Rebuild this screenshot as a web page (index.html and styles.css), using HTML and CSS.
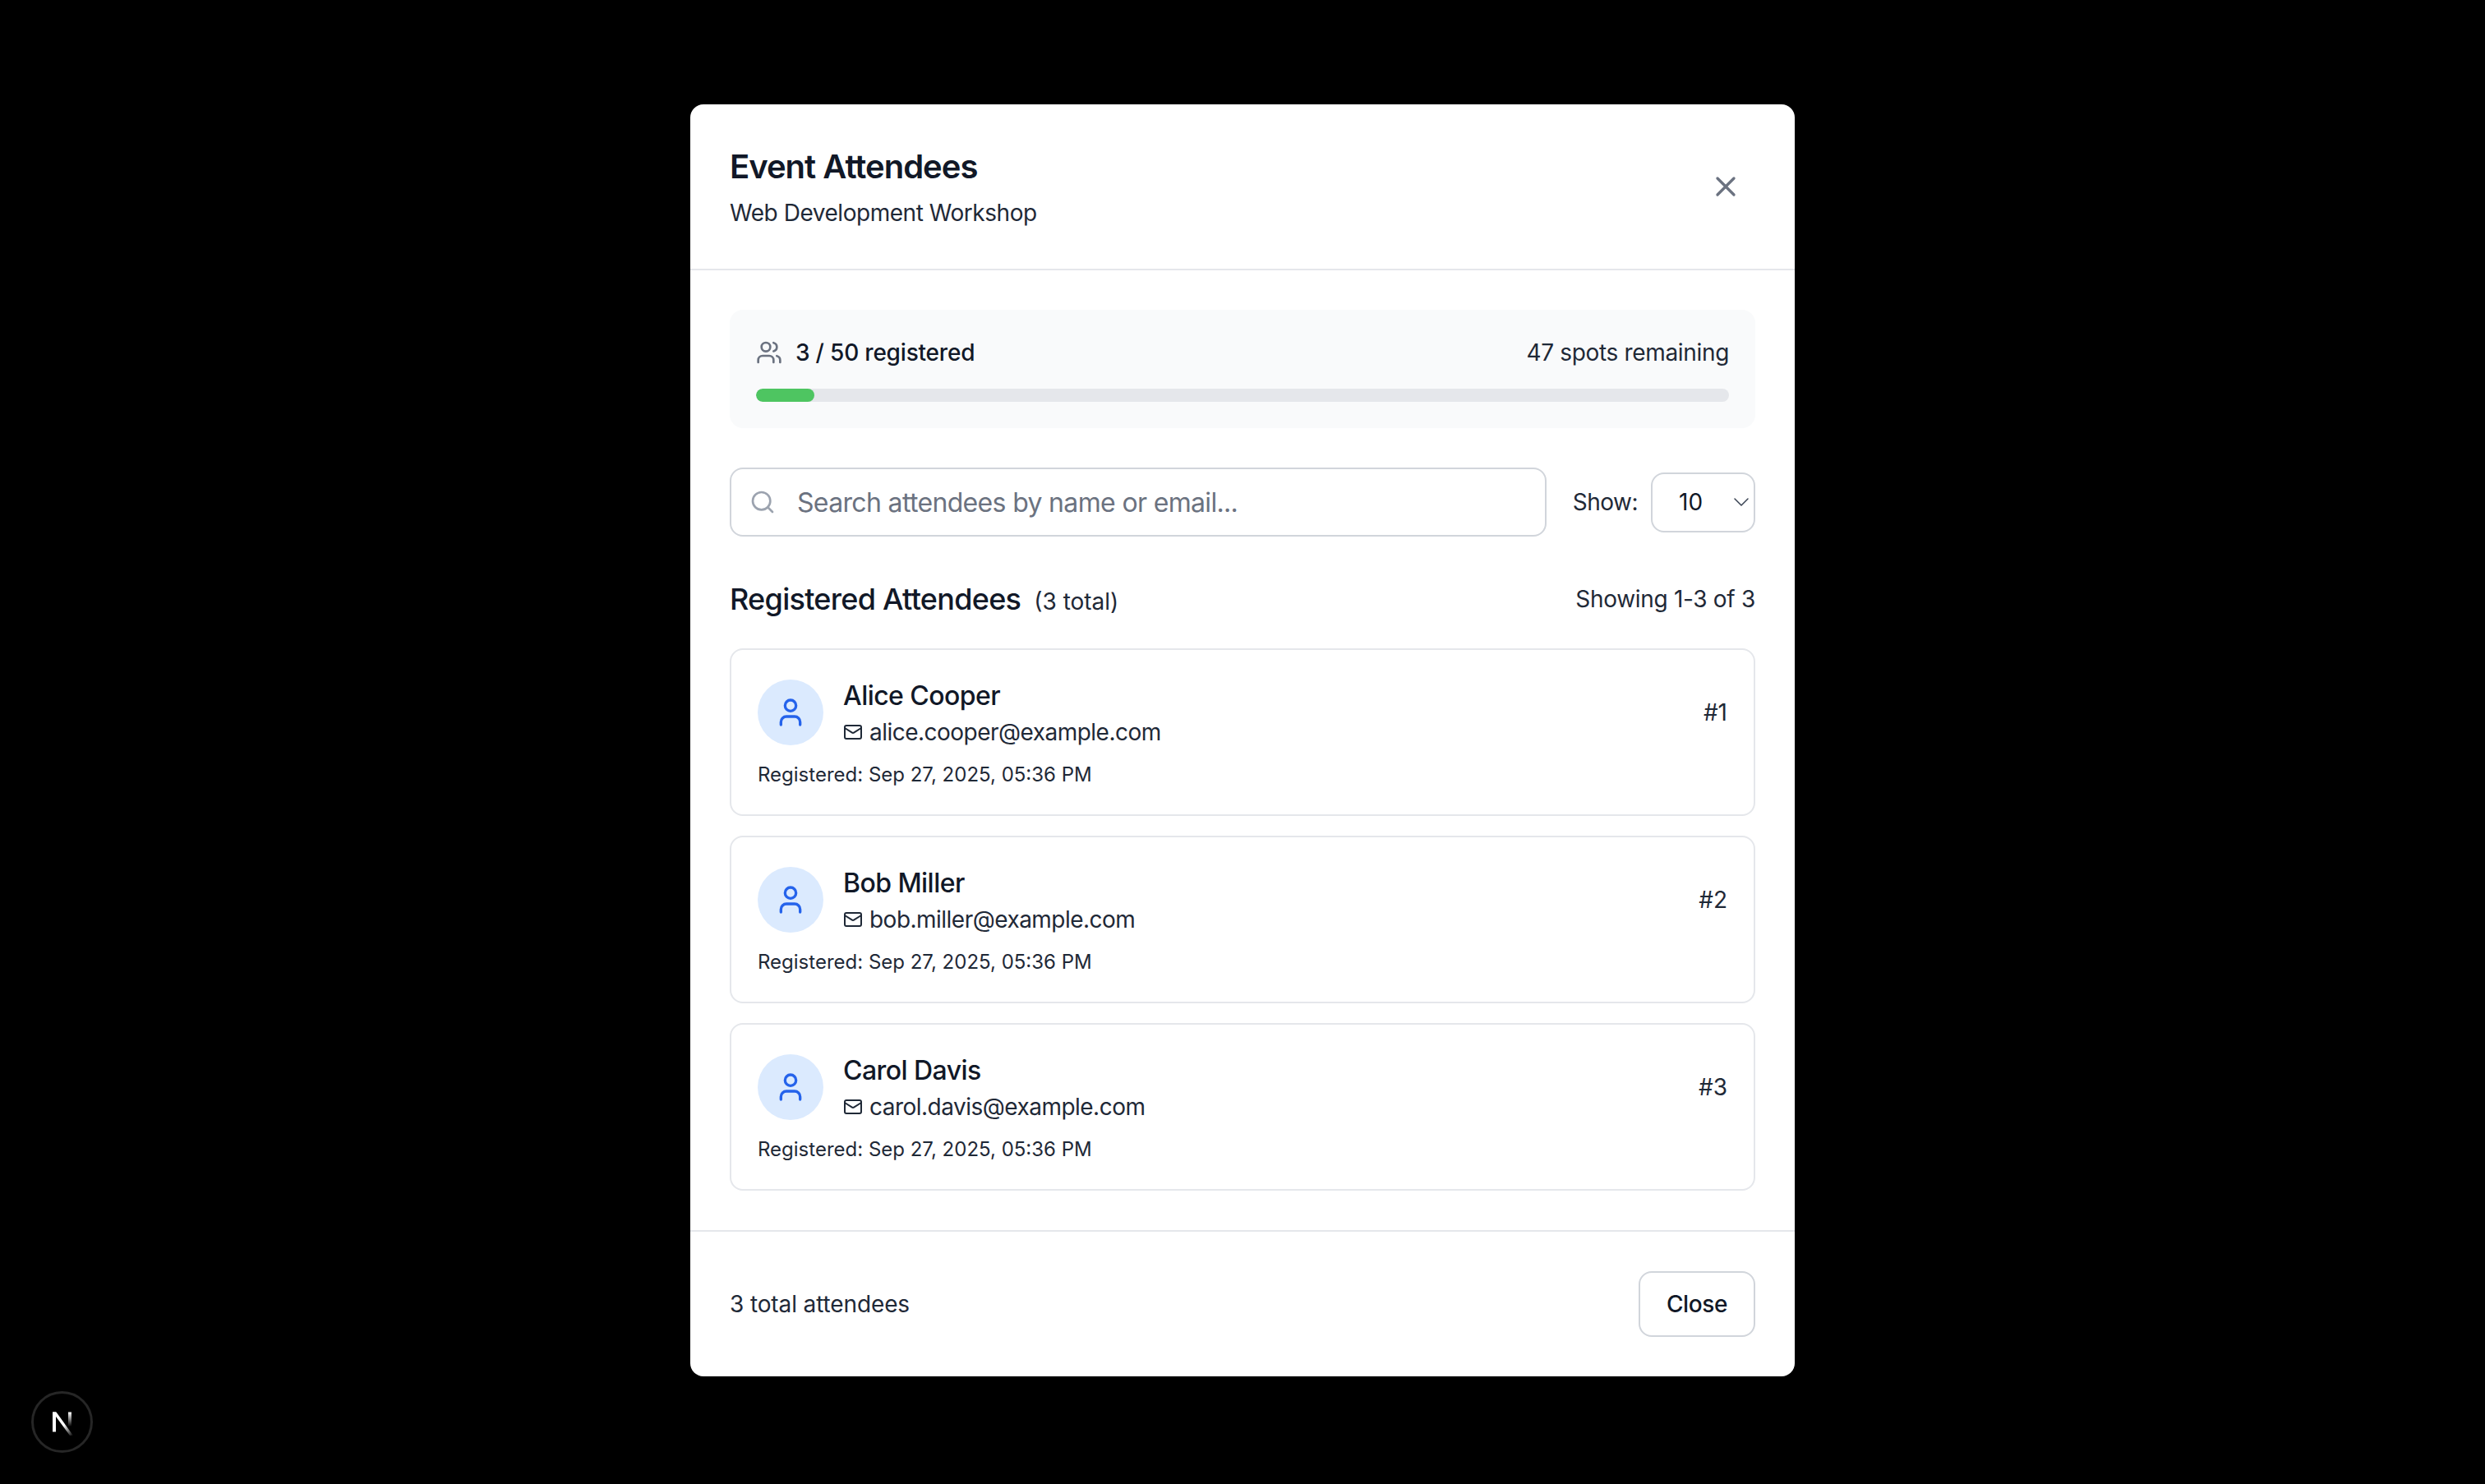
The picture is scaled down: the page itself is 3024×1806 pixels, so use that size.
FILE: index.html

```html
<!DOCTYPE html>
<html lang="en">
<head>
  <meta charset="UTF-8">
  <title>Event Attendees</title>
  <link rel="stylesheet" href="styles.css">
</head>
<body>

<div class="overlay">
  <div class="modal">
    <div class="modal-header">
      <div>
        <h2 class="modal-title">Event Attendees</h2>
        <p class="modal-subtitle">Web Development Workshop</p>
      </div>
      <button class="icon-btn" aria-label="Close">
        <svg class="icon-40" viewBox="0 0 24 24" fill="none" stroke="currentColor" stroke-width="2" stroke-linecap="round" stroke-linejoin="round"><path d="M6 18 18 6M6 6l12 12"/></svg>
      </button>
    </div>

    <div class="modal-body">
      <div class="capacity">
        <div class="capacity-row">
          <div class="capacity-label">
            <svg class="icon-32 muted" viewBox="0 0 24 24" fill="none" stroke="currentColor" stroke-width="2" stroke-linecap="round" stroke-linejoin="round"><path d="M16 21v-2a4 4 0 0 0-4-4H6a4 4 0 0 0-4 4v2"/><circle cx="9" cy="7" r="4"/><path d="M22 21v-2a4 4 0 0 0-3-3.87"/><path d="M16 3.13a4 4 0 0 1 0 7.75"/></svg>
            <span>3 / 50 registered</span>
          </div>
          <span class="capacity-left">47 spots remaining</span>
        </div>
        <div class="bar"><div class="bar-fill" style="width: 6%"></div></div>
      </div>

      <div class="controls">
        <div class="search">
          <svg class="search-icon" viewBox="0 0 24 24" fill="none" stroke="currentColor" stroke-width="2" stroke-linecap="round" stroke-linejoin="round"><circle cx="11" cy="11" r="8"/><path d="m21 21-4.3-4.3"/></svg>
          <input class="search-input" type="text" placeholder="Search attendees by name or email...">
        </div>
        <div class="page-size">
          <label class="page-size-label" for="size">Show:</label>
          <div class="select-wrap">
            <select class="select" id="size">
              <option>10</option>
              <option>25</option>
              <option>50</option>
            </select>
            <svg class="select-arrow" viewBox="0 0 20 20" fill="none" stroke="currentColor" stroke-width="1.5" stroke-linecap="round" stroke-linejoin="round"><path d="m2 5 8 8 8-8"/></svg>
          </div>
        </div>
      </div>

      <div class="list-head">
        <div class="list-heading">
          <h3 class="list-title">Registered Attendees</h3>
          <span class="list-count">(3 total)</span>
        </div>
        <span class="list-showing">Showing 1-3 of 3</span>
      </div>

      <div class="list">
        <div class="card">
          <div class="card-row">
            <div class="person">
              <div class="avatar">
                <svg class="icon-40" viewBox="0 0 24 24" fill="none" stroke="currentColor" stroke-width="2" stroke-linecap="round" stroke-linejoin="round"><path d="M19 21v-2a4 4 0 0 0-4-4H9a4 4 0 0 0-4 4v2"/><circle cx="12" cy="7" r="4"/></svg>
              </div>
              <div>
                <div class="name">Alice Cooper</div>
                <div class="email">
                  <svg class="icon-24" viewBox="0 0 24 24" fill="none" stroke="currentColor" stroke-width="2" stroke-linecap="round" stroke-linejoin="round"><rect x="2" y="4" width="20" height="16" rx="2"/><path d="m22 7-8.97 5.7a1.94 1.94 0 0 1-2.06 0L2 7"/></svg>
                  <span>alice.cooper@example.com</span>
                </div>
              </div>
            </div>
            <span class="rank">#1</span>
          </div>
          <div class="registered">Registered: Sep 27, 2025, 05:36 PM</div>
        </div>

        <div class="card">
          <div class="card-row">
            <div class="person">
              <div class="avatar">
                <svg class="icon-40" viewBox="0 0 24 24" fill="none" stroke="currentColor" stroke-width="2" stroke-linecap="round" stroke-linejoin="round"><path d="M19 21v-2a4 4 0 0 0-4-4H9a4 4 0 0 0-4 4v2"/><circle cx="12" cy="7" r="4"/></svg>
              </div>
              <div>
                <div class="name">Bob Miller</div>
                <div class="email">
                  <svg class="icon-24" viewBox="0 0 24 24" fill="none" stroke="currentColor" stroke-width="2" stroke-linecap="round" stroke-linejoin="round"><rect x="2" y="4" width="20" height="16" rx="2"/><path d="m22 7-8.97 5.7a1.94 1.94 0 0 1-2.06 0L2 7"/></svg>
                  <span>bob.miller@example.com</span>
                </div>
              </div>
            </div>
            <span class="rank">#2</span>
          </div>
          <div class="registered">Registered: Sep 27, 2025, 05:36 PM</div>
        </div>

        <div class="card">
          <div class="card-row">
            <div class="person">
              <div class="avatar">
                <svg class="icon-40" viewBox="0 0 24 24" fill="none" stroke="currentColor" stroke-width="2" stroke-linecap="round" stroke-linejoin="round"><path d="M19 21v-2a4 4 0 0 0-4-4H9a4 4 0 0 0-4 4v2"/><circle cx="12" cy="7" r="4"/></svg>
              </div>
              <div>
                <div class="name">Carol Davis</div>
                <div class="email">
                  <svg class="icon-24" viewBox="0 0 24 24" fill="none" stroke="currentColor" stroke-width="2" stroke-linecap="round" stroke-linejoin="round"><rect x="2" y="4" width="20" height="16" rx="2"/><path d="m22 7-8.97 5.7a1.94 1.94 0 0 1-2.06 0L2 7"/></svg>
                  <span>carol.davis@example.com</span>
                </div>
              </div>
            </div>
            <span class="rank">#3</span>
          </div>
          <div class="registered">Registered: Sep 27, 2025, 05:36 PM</div>
        </div>
      </div>
    </div>

    <div class="modal-footer">
      <span class="footer-total">3 total attendees</span>
      <button class="btn">Close</button>
    </div>
  </div>
</div>

<div class="dev-badge">
  <svg class="dev-logo" viewBox="0 0 28 32" fill="none">
    <defs>
      <linearGradient id="fadeDiag" x1="0" y1="0" x2="1" y2="1">
        <stop offset="0.55" stop-color="#fff"/>
        <stop offset="1" stop-color="#fff" stop-opacity="0"/>
      </linearGradient>
      <linearGradient id="fadeStem" gradientUnits="userSpaceOnUse" x1="0" y1="3.5" x2="0" y2="21">
        <stop offset="0" stop-color="#fff"/>
        <stop offset="1" stop-color="#fff" stop-opacity="0"/>
      </linearGradient>
    </defs>
    <rect x="2" y="3.5" width="4" height="24" fill="#fff"/>
    <path d="M2 3.5h4.5L27 32h-4z" fill="url(#fadeDiag)"/>
    <rect x="21" y="3.5" width="4" height="17.5" fill="url(#fadeStem)"/>
  </svg>
</div>

</body>
</html>
```

FILE: styles.css

```css
* {
  box-sizing: border-box;
}

body {
  margin: 0;
  background: #000;
  color: #111827;
  font-family: Inter, "Liberation Sans", sans-serif;
}

.overlay {
  display: flex;
  align-items: center;
  justify-content: center;
  min-height: 100vh;
  padding-bottom: 4px;
}

.modal {
  width: 1344px;
  background: #fff;
  border-radius: 16px;
}

.modal-header {
  display: flex;
  align-items: center;
  justify-content: space-between;
  padding: 48px;
  border-bottom: 2px solid #e5e7eb;
}

.modal-title {
  margin: 0;
  font-size: 40px;
  line-height: 56px;
  font-weight: 600;
  letter-spacing: -1px;
}

.modal-subtitle {
  margin: 8px 0 0;
  font-size: 28px;
  line-height: 40px;
  letter-spacing: -0.46px;
  color: #1f2937;
}

.icon-btn {
  display: flex;
  padding: 16px;
  background: none;
  border: none;
  color: #6b7280;
}

.icon-40 {
  width: 40px;
  height: 40px;
  flex-shrink: 0;
}

.icon-32 {
  width: 32px;
  height: 32px;
  flex-shrink: 0;
}

.icon-24 {
  width: 24px;
  height: 24px;
  flex-shrink: 0;
}

.muted {
  color: #6b7280;
}

.modal-body {
  padding: 48px;
}

.capacity {
  padding: 32px;
  margin-bottom: 48px;
  background: #f9fafb;
  border-radius: 16px;
}

.capacity-row {
  display: flex;
  align-items: center;
  justify-content: space-between;
  margin-bottom: 24px;
  font-size: 28px;
  line-height: 40px;
}

.capacity-label {
  display: flex;
  align-items: center;
  gap: 16px;
  font-weight: 500;
  letter-spacing: -0.2px;
}

.capacity-left {
  letter-spacing: -0.33px;
  color: #1f2937;
}

.bar {
  height: 16px;
  background: #e5e7eb;
  border-radius: 8px;
  overflow: hidden;
}

.bar-fill {
  height: 100%;
  background: #4ec561;
  border-radius: 8px;
}

.controls {
  display: flex;
  align-items: center;
  gap: 32px;
  margin-bottom: 48px;
}

.search {
  position: relative;
  flex: 1;
}

.search-icon {
  position: absolute;
  left: 24px;
  top: 26px;
  width: 32px;
  height: 32px;
  color: #9ca3af;
}

.search-input {
  display: block;
  width: 100%;
  height: 84px;
  padding: 0 32px 0 80px;
  font: 32px/48px Inter, "Liberation Sans", sans-serif;
  letter-spacing: -0.66px;
  color: #111827;
  background: #fff;
  border: 2px solid #d1d5db;
  border-radius: 16px;
  outline: none;
}

.search-input::placeholder {
  color: #6b7280;
  opacity: 1;
}

.page-size {
  display: flex;
  align-items: center;
  gap: 16px;
}

.page-size-label {
  font-size: 28px;
  line-height: 40px;
  letter-spacing: -0.5px;
  color: #1f2937;
}

.select-wrap {
  position: relative;
}

.select {
  display: block;
  width: 127px;
  height: 73px;
  padding: 0 0 0 32px;
  font: 28px/40px Inter, "Liberation Sans", sans-serif;
  color: #111827;
  background: #fff;
  border: 2px solid #d1d5db;
  border-radius: 16px;
  outline: none;
  appearance: none;
}

.select-arrow {
  position: absolute;
  right: 7px;
  top: 27px;
  width: 20px;
  height: 20px;
  color: #374151;
  pointer-events: none;
}

.list-head {
  display: flex;
  align-items: center;
  justify-content: space-between;
  margin-bottom: 32px;
}

.list-heading {
  display: flex;
  align-items: baseline;
  gap: 16px;
}

.list-title {
  margin: 0;
  font-size: 36px;
  line-height: 56px;
  font-weight: 500;
  letter-spacing: -0.72px;
}

.list-count {
  font-size: 28px;
  line-height: 40px;
  color: #1f2937;
}

.list-showing {
  font-size: 28px;
  line-height: 40px;
  letter-spacing: -0.3px;
  color: #1f2937;
}

.list {
  display: flex;
  flex-direction: column;
  gap: 24px;
}

.card {
  padding: 32px;
  border: 2px solid #e5e7eb;
  border-radius: 16px;
}

.card-row {
  display: flex;
  align-items: center;
  justify-content: space-between;
}

.person {
  display: flex;
  align-items: center;
  gap: 24px;
}

.avatar {
  display: flex;
  align-items: center;
  justify-content: center;
  width: 80px;
  height: 80px;
  background: #dbeafe;
  border-radius: 50%;
  color: #2563eb;
}

.name {
  font-size: 32px;
  line-height: 48px;
  font-weight: 500;
  letter-spacing: -0.55px;
}

.email {
  display: flex;
  align-items: center;
  gap: 8px;
  font-size: 28px;
  line-height: 40px;
  letter-spacing: -0.52px;
  color: #1f2937;
}

.rank {
  font-size: 28px;
  line-height: 40px;
  color: #1f2937;
}

.registered {
  margin-top: 16px;
  font-size: 24px;
  line-height: 32px;
  color: #1f2937;
}

.modal-footer {
  display: flex;
  align-items: center;
  justify-content: space-between;
  padding: 48px;
  border-top: 2px solid #e5e7eb;
}

.footer-total {
  font-size: 28px;
  line-height: 40px;
  letter-spacing: -0.12px;
  color: #1f2937;
}

.btn {
  height: 80px;
  padding: 0 32px;
  font: 500 28px/40px Inter, "Liberation Sans", sans-serif;
  letter-spacing: -0.4px;
  color: #111827;
  background: #fff;
  border: 2px solid #d1d5db;
  border-radius: 16px;
}

.dev-badge {
  position: fixed;
  left: 38px;
  top: 1693px;
  display: flex;
  align-items: center;
  justify-content: center;
  width: 75px;
  height: 75px;
  background: #000;
  border: 3px solid #262626;
  border-radius: 50%;
}

.dev-logo {
  width: 28px;
  height: 32px;
}
```
